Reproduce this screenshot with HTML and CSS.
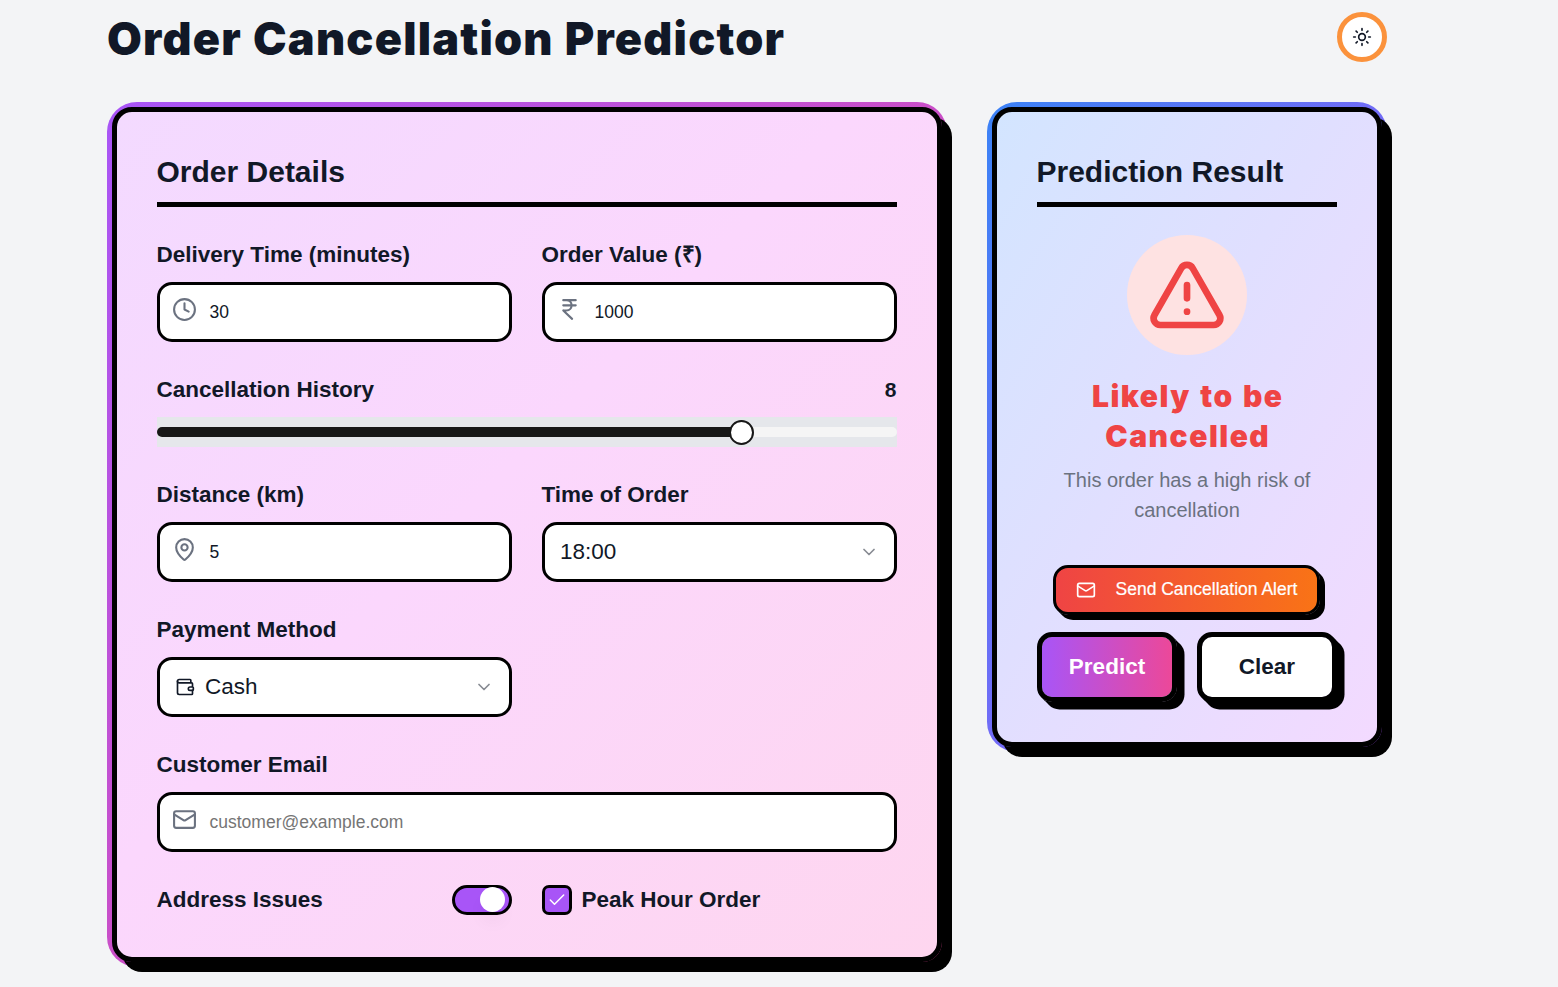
FILE: index.html
```html
<!DOCTYPE html>
<html lang="en">
<head>
<meta charset="utf-8">
<title>Order Cancellation Predictor</title>
<link rel="stylesheet" href="styles.css">
</head>
<body>
<div class="page">
  <header class="header">
    <h1 class="title">Order Cancellation Predictor</h1>
    <button class="theme" aria-label="Toggle theme">
      <svg class="icon sm" viewBox="0 0 24 24"><circle cx="12" cy="12" r="4"/><path d="M12 2v2M12 20v2M4.93 4.93l1.41 1.41M17.66 17.66l1.41 1.41M2 12h2M20 12h2M6.34 17.66l-1.41 1.41M19.07 4.93l-1.41 1.41"/></svg>
    </button>
  </header>
  <main class="columns">
    <section class="frame frame-pink">
      <div class="card card-pink">
        <h2 class="heading">Order Details</h2>
        <div class="grid">
          <div class="field">
            <label class="label">Delivery Time (minutes)</label>
            <div class="box input">
              <svg class="icon lead" viewBox="0 0 24 24"><circle cx="12" cy="12" r="10"/><path d="M12 6v6l4 2"/></svg>
              <span>30</span>
            </div>
          </div>
          <div class="field">
            <label class="label">Order Value (₹)</label>
            <div class="box input">
              <svg class="icon lead" viewBox="0 0 24 24"><path d="M6 3h12M6 8h12M6 13l8.5 8M6 13h3M9 13c6.667 0 6.667-10 0-10"/></svg>
              <span>1000</span>
            </div>
          </div>
          <div class="field wide">
            <div class="between"><label class="label">Cancellation History</label><span class="value">8</span></div>
            <div class="slider">
              <div class="track"><div class="range" style="width:79%"></div></div>
              <div class="knob" style="left:79.05%"></div>
            </div>
          </div>
          <div class="field">
            <label class="label">Distance (km)</label>
            <div class="box input">
              <svg class="icon lead" viewBox="0 0 24 24"><path d="M20 10c0 4.993-5.539 10.193-7.399 11.799a1 1 0 0 1-1.202 0C9.539 20.193 4 14.993 4 10a8 8 0 0 1 16 0"/><circle cx="12" cy="10" r="3"/></svg>
              <span>5</span>
            </div>
          </div>
          <div class="field">
            <label class="label">Time of Order</label>
            <div class="box select">
              <span>18:00</span>
              <svg class="icon sm chevron" viewBox="0 0 24 24"><path d="m6 9 6 6 6-6"/></svg>
            </div>
          </div>
          <div class="field first">
            <label class="label">Payment Method</label>
            <div class="box select">
              <svg class="icon sm" viewBox="0 0 24 24"><path d="M19 7V4a1 1 0 0 0-1-1H5a2 2 0 0 0 0 4h15a1 1 0 0 1 1 1v4h-3a2 2 0 0 0 0 4h3a1 1 0 0 0 1-1v-2a1 1 0 0 0-1-1"/><path d="M3 5v14a2 2 0 0 0 2 2h15a1 1 0 0 0 1-1v-4"/></svg>
              <span>Cash</span>
              <svg class="icon sm chevron" viewBox="0 0 24 24"><path d="m6 9 6 6 6-6"/></svg>
            </div>
          </div>
          <div class="field wide">
            <label class="label">Customer Email</label>
            <div class="box input">
              <svg class="icon lead" viewBox="0 0 24 24"><rect x="2" y="4" width="20" height="16" rx="2"/><path d="m22 7-8.97 5.7a1.94 1.94 0 0 1-2.06 0L2 7"/></svg>
              <span class="placeholder">customer@example.com</span>
            </div>
          </div>
          <div class="between">
            <label class="label">Address Issues</label>
            <div class="switch"><div class="switch-thumb"></div></div>
          </div>
          <div class="check-row">
            <div class="checkbox"><svg class="icon sm" viewBox="0 0 24 24"><path d="M20 6 9 17l-5-5"/></svg></div>
            <label class="label">Peak Hour Order</label>
          </div>
        </div>
      </div>
    </section>
    <section class="frame frame-blue">
      <div class="card card-blue">
        <h2 class="heading">Prediction Result</h2>
        <div class="result">
          <div class="badge">
            <svg class="icon alert-icon" viewBox="0 0 24 24"><path d="m21.73 18-8-14a2 2 0 0 0-3.48 0l-8 14A2 2 0 0 0 4 21h16a2 2 0 0 0 1.73-3"/><path d="M12 9v4M12 17h.01"/></svg>
          </div>
          <h3 class="verdict">Likely to be Cancelled</h3>
          <p class="note">This order has a high risk of cancellation</p>
          <button class="send">
            <svg class="icon sm" viewBox="0 0 24 24"><rect x="2" y="4" width="20" height="16" rx="2"/><path d="m22 7-8.97 5.7a1.94 1.94 0 0 1-2.06 0L2 7"/></svg>
            <span>Send Cancellation Alert</span>
          </button>
        </div>
        <div class="actions">
          <button class="btn predict">Predict</button>
          <button class="btn clear">Clear</button>
        </div>
      </div>
    </section>
  </main>
</div>
</body>
</html>
```

FILE: styles.css
```css
* { box-sizing: border-box; margin: 0; padding: 0; }
body {
  min-height: 987px;
  background: #f3f4f6;
  color: #111827;
  font-family: "Liberation Sans", Arial, sans-serif;
}
button { font-family: inherit; color: inherit; }
.page { width: 1280px; margin-left: 107px; padding: 12px 0 15px; }
.header { display: flex; justify-content: space-between; align-items: flex-start; height: 50px; margin-bottom: 40px; }
.title {
  padding-top: 2px;
  font-family: "Arial Black", Inter, "Liberation Sans", sans-serif;
  font-size: 45px;
  line-height: 50px;
  font-weight: 900;
  letter-spacing: 1.2px;
  word-spacing: 1px;
  white-space: nowrap;
}
.theme {
  display: flex; align-items: center; justify-content: center;
  width: 50px; height: 50px;
  border: 5px solid #fb923c; border-radius: 50%;
  background: #fff;
}
.icon { display: block; flex: none; fill: none; stroke: currentColor; stroke-width: 2; stroke-linecap: round; stroke-linejoin: round; }
.sm { width: 20px; height: 20px; }
.columns { display: grid; grid-template-columns: 840px 400px; gap: 40px; align-items: start; }
.frame { padding: 5px; border-radius: 30px; }
.frame-pink { background: linear-gradient(to bottom right, #a855f7, #ec4899); }
.frame-blue { background: linear-gradient(to bottom right, #3b82f6, #a855f7); }
.card { padding: 40px; border: 5px solid #000; border-radius: 20px; box-shadow: 10px 10px 0 #000; }
.card-pink { background: linear-gradient(to bottom right, #f3daff, #fbd7fd 45%, #fed6ef); }
.card-blue { background: linear-gradient(to bottom right, #d3e5ff, #e0dfff 45%, #f3daff); }
.heading { padding-bottom: 10px; border-bottom: 5px solid #000; font-size: 30px; line-height: 40px; font-weight: 700; text-indent: -.5px; white-space: nowrap; }
.grid { display: grid; grid-template-columns: 1fr 1fr; gap: 30px; margin-top: 30px; }
.field { display: flex; flex-direction: column; gap: 10px; }
.wide { grid-column: span 2; }
.first { grid-column: 1; }
.label { margin-left: -.5px; font-size: 22.5px; line-height: 35px; font-weight: 700; }
.between { display: flex; justify-content: space-between; align-items: center; }
.value { margin-right: .5px; font-size: 21px; font-weight: 700; }
.box { position: relative; display: flex; align-items: center; height: 60px; border: 3px solid #000; border-radius: 15px; background: #fff; }
.input { padding-left: 49.5px; font-size: 17.5px; }
.lead { position: absolute; left: 12px; top: 12px; width: 25px; height: 25px; color: #6b7280; }
.placeholder { color: #757575; }
.select { gap: 10px; padding: 0 15px; font-size: 22.5px; }
.chevron { margin-left: auto; opacity: .5; }
.slider { position: relative; height: 30px; padding: 10px 0; background: #e5e7eb; }
.track { height: 10px; border-radius: 5px; background: #f5f5f5; overflow: hidden; }
.range { height: 10px; background: #171717; }
.knob { position: absolute; top: 3px; width: 25px; height: 25px; margin-left: -12.5px; border: 2px solid #171717; border-radius: 50%; background: #fff; }
.switch { display: flex; align-items: center; justify-content: flex-end; width: 60px; height: 30px; padding-right: 4px; border: 3px solid #000; border-radius: 15px; background: #a855f7; }
.switch-thumb { flex: none; width: 25px; height: 25px; border-radius: 50%; background: #fff; box-shadow: 0 12px 19px -4px rgba(0,0,0,.07), 0 5px 7px -5px rgba(0,0,0,.07); }
.check-row { display: flex; align-items: center; gap: 10px; }
.checkbox { display: flex; align-items: center; justify-content: center; width: 30px; height: 30px; border: 3px solid #000; border-radius: 7px; background: #a855f7; color: #fff; }
.checkbox .icon { stroke-width: 1.8; }
.result { display: flex; flex-direction: column; align-items: center; margin-top: 28px; text-align: center; }
.badge { display: flex; align-items: center; justify-content: center; width: 120px; height: 120px; border-radius: 50%; background: #fee2e2; }
.alert-icon { width: 80px; height: 80px; color: #ef4444; }
.verdict {
  width: 230px; margin-top: 21px; padding-left: 1.5px;
  color: #ef4444; font-size: 30px; line-height: 40px; font-weight: 900;
  font-family: "Arial Black", Inter, "Liberation Sans", sans-serif;
  letter-spacing: 1.5px;
  word-spacing: 1.8px;
}
.note { width: 270px; margin-top: 9px; color: #6b7280; font-size: 20px; line-height: 30px; }
.send {
  display: flex; align-items: center; gap: 19.5px;
  width: 267px; height: 50px; margin: 40px 1px 0 0; padding-left: 20px;
  border: 3px solid #000; border-radius: 15px;
  background: linear-gradient(to right, #ef4444, #f97316);
  box-shadow: 5px 5px 0 #000, 2px 2px 0 #000;
  color: #fff; font-size: 17.5px; white-space: nowrap;
}
.send span { padding-bottom: 2px; -webkit-text-stroke: .2px #fff; }
.actions { display: grid; grid-template-columns: 1fr 1fr; gap: 20px; margin-top: 17px; }
.btn { height: 70px; border: 5px solid #000; border-radius: 15px; box-shadow: 7.5px 7.5px 0 #000, 3px 3px 0 #000; font-size: 22.5px; font-weight: 700; }
.predict { background: linear-gradient(to right, #a855f7, #ec4899) padding-box; color: #fff; }
.clear { background: #fff padding-box; }
```
